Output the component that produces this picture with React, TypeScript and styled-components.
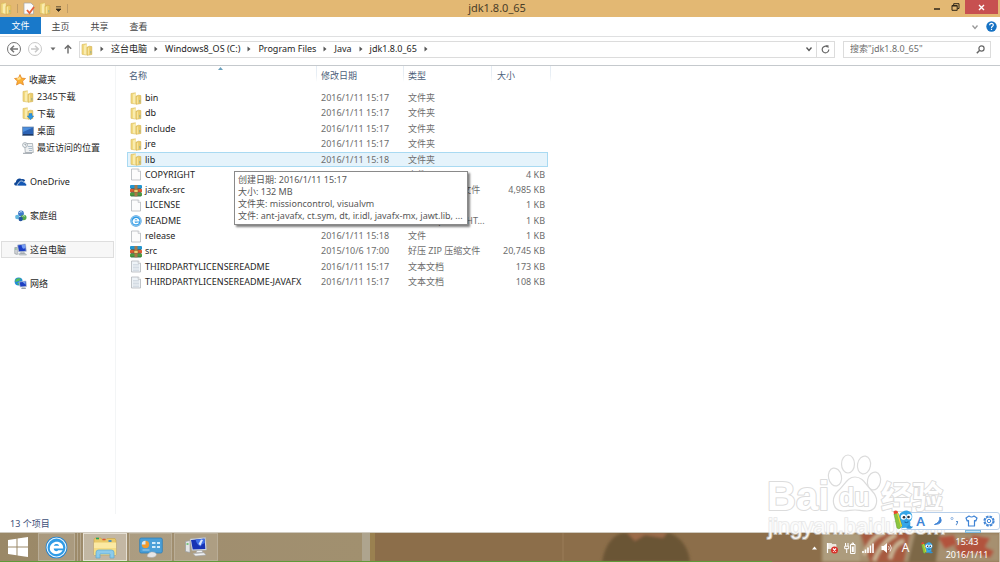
import React from "react";
import styled, { createGlobalStyle, css } from "styled-components";

const GlobalStyle = createGlobalStyle`
  * { box-sizing: border-box; }
  body {
    margin: 0;
    background: #fff;
    font-family: "Noto Sans", "Noto Sans CJK SC", sans-serif;
    font-size: 9px;
    line-height: 12px;
    color: #1e1e1e;
  }
  button, input {
    font: inherit;
    color: inherit;
    border: 0;
    margin: 0;
    padding: 0;
    background: none;
  }
  a { color: inherit; text-decoration: none; }
  svg { display: block; flex: none; }
`;

const Screen = styled.div`
  position: relative;
  display: flex;
  flex-direction: column;
  min-height: 100vh;
  overflow: hidden;
`;

/* ---------- title bar ---------- */
const TitleBar = styled.header`
  display: grid;
  grid-template-columns: 1fr auto 1fr;
  height: 17px;
  background: #e3b873;
`;
const QuickAccess = styled.div`
  display: flex;
  align-items: center;
  gap: 4px;
`;
const Rule = styled.span`
  width: 1px;
  height: 9px;
  margin: 0 1px;
  background: #c09c66;
`;
const Title = styled.h1`
  margin: 0;
  padding-right: 6px;
  font-size: 11px;
  font-weight: 400;
  line-height: 16px;
  color: #4a3d28;
`;
const WindowControls = styled.div`
  display: flex;
  justify-content: flex-end;
  padding-right: 2px;
`;
const WindowButton = styled.button<{ $close?: boolean }>`
  display: flex;
  align-items: center;
  justify-content: center;
  width: ${(p) => (p.$close ? 33 : 19)}px;
  height: 14px;
  background: ${(p) => (p.$close ? "#c75050" : "transparent")};
`;

/* ---------- ribbon ---------- */
const Ribbon = styled.nav`
  display: flex;
  align-items: flex-start;
  height: 20px;
  border-bottom: 1px solid #dfe0e1;
`;
const Tab = styled.button<{ $primary?: boolean }>`
  height: 17px;
  width: ${(p) => (p.$primary ? 41 : 39)}px;
  line-height: 17px;
  color: ${(p) => (p.$primary ? "#fff" : "#444")};
  background: ${(p) => (p.$primary ? "#1979ca" : "transparent")};
  & + & { padding-top: 1px; }
`;
const RibbonEnd = styled.div`
  display: flex;
  align-items: center;
  gap: 7px;
  height: 19px;
  margin-left: auto;
  padding-right: 3px;
`;

/* ---------- address row ---------- */
const AddressRow = styled.div`
  display: flex;
  align-items: center;
  height: 29px;
  padding: 0 9px 4px 6px;
  border-bottom: 1px solid #c5c9cd;
`;
const IconButton = styled.button`
  display: flex;
  align-items: center;
  justify-content: center;
`;
const HistoryButtons = styled.div`
  display: flex;
  align-items: center;
  gap: 5px;
  width: 73px;
`;
const AddressBox = styled.div`
  display: flex;
  flex: 1;
  align-items: center;
  height: 17px;
  border: 1px solid #dcdcdc;
  padding-left: 1px;
`;
const Crumb = styled.a`
  display: flex;
  align-items: center;
  white-space: nowrap;
`;
const CrumbArrow = styled.span`
  display: flex;
  justify-content: center;
  width: 18px;
`;
const AddressEnd = styled.div`
  display: flex;
  align-items: center;
  height: 15px;
  margin-left: auto;
`;
const Refresh = styled(IconButton)`
  width: 18px;
  height: 15px;
  border-left: 1px solid #dcdcdc;
`;
const DropButton = styled(IconButton)`
  width: 14px;
  height: 15px;
`;
const SearchBox = styled.label`
  display: flex;
  align-items: center;
  width: 148px;
  height: 17px;
  margin-left: 8px;
  padding: 0 5px 0 6px;
  border: 1px solid #dcdcdc;
  input {
    flex: 1;
    min-width: 0;
    outline: 0;
  }
  input::placeholder { color: #6d6d6d; opacity: 1; }
`;

/* ---------- body ---------- */
const Body = styled.div`
  display: flex;
  flex: 1;
`;
const Sidebar = styled.aside`
  display: flex;
  flex-direction: column;
  gap: 17px;
  width: 116px;
  padding: 5px 1px 0;
  border-right: 1px solid #f3f5f6;
`;
const NavGroup = styled.div`
  display: flex;
  flex-direction: column;
`;
const NavItem = styled.a<{ $child?: boolean; $active?: boolean }>`
  display: flex;
  align-items: center;
  gap: 3px;
  height: 17px;
  padding-left: ${(p) => (p.$child ? 20 : 12)}px;
  white-space: nowrap;
  border: 1px solid transparent;
  ${(p) =>
    p.$active &&
    css`
      border-color: #dedede;
      background: #f7f7f7;
    `}
`;

const Files = styled.main`
  flex: 1;
  padding-left: 11px;
`;
const FileTable = styled.table`
  width: 421px;
  table-layout: fixed;
  border-collapse: separate;
  border-spacing: 0;
`;
const HeadCell = styled.th<{ $width: number; $last?: boolean }>`
  position: relative;
  width: ${(p) => p.$width}px;
  height: 25px;
  padding: 0 0 5px ${(p) => (p.$last ? 5 : 4)}px;
  font-weight: 400;
  text-align: left;
  color: #4c607a;
  &:first-child { padding-left: 2px; }
  &::after {
    content: "";
    position: absolute;
    top: 0;
    right: ${(p) => (p.$last ? -3 : 0)}px;
    width: 1px;
    height: 16px;
    background: linear-gradient(#e4ecf4, #e9eff5 60%, #fff);
  }
`;
const SortMark = styled.span`
  position: absolute;
  top: 1px;
  left: 91px;
`;
const FileRow = styled.tr<{ $active?: boolean }>`
  height: 15px;
  &:nth-child(3n) { height: 16px; }
  td {
    padding: 0 3px 1px 4px;
    white-space: nowrap;
    color: #6d6d6d;
    border: 0 solid #a9daf2;
    ${(p) =>
      p.$active &&
      css`
        padding-bottom: 0;
        background: #e5f3fb;
        border-width: 1px 0;
        line-height: 10px;
      `}
  }
  td:first-child { padding-left: 3px; padding-right: 0; color: #1e1e1e; ${(p) => p.$active && "border-left-width: 1px; padding-left: 2px;"} }
  td:last-child { text-align: right; ${(p) => p.$active && "border-right-width: 1px; padding-right: 2px;"} }
`;
const NameCell = styled.div`
  position: relative;
  display: flex;
  align-items: center;
  gap: 3px;
  height: 13px;
`;
const Tooltip = styled.div`
  position: absolute;
  z-index: 2;
  top: 18px;
  left: 104px;
  width: 234px;
  padding: 2px 3px;
  border: 1px solid #8a8a8a;
  background: #fff;
  color: #575757;
  box-shadow: 2px 2px 2px rgba(0, 0, 0, 0.5);
  line-height: 12px;
`;

const StatusBar = styled.footer`
  display: flex;
  align-items: center;
  height: 18px;
  padding: 2px 10px 0;
  color: #3d4f78;
`;

/* ---------- taskbar ---------- */
const Taskbar = styled.div`
  position: relative;
  display: flex;
  height: 30px;
  border-top: 1px solid #cfcabf;
  background: #8b6d49;
`;
const Wallpaper = styled.svg`
  position: absolute;
  inset: 0;
  width: 100%;
  height: 100%;
`;
const TaskButtons = styled.div`
  position: relative;
  display: flex;
  gap: 2px;
`;
const TaskButton = styled.button<{ $width: number; $tone?: "open" | "active" }>`
  display: flex;
  align-items: center;
  justify-content: center;
  width: ${(p) => p.$width}px;
  height: 28px;
  border: 1px solid ${(p) => (p.$tone === "active" ? "#e5dfd3" : p.$tone ? "#b9ad97" : "transparent")};
  background: ${(p) =>
    p.$tone === "active" ? "rgba(255,255,255,.38)" : p.$tone ? "rgba(255,255,255,.14)" : "transparent"};
`;
const Divider = styled.span`
  width: 4px;
  height: 28px;
  border: solid #b5a78f;
  border-width: 0 1px;
`;
const Tray = styled.div`
  position: relative;
  display: flex;
  align-items: center;
  margin-left: auto;
  padding-right: 2px;
  border-right: 1px solid #c8bba6;
`;
const TrayButton = styled.button<{ $width?: number }>`
  display: flex;
  align-items: center;
  justify-content: center;
  width: ${(p) => p.$width ?? 18}px;
  height: 28px;
  font-size: 12px;
  color: #fff;
`;
const Clock = styled.time`
  width: 60px;
  text-align: center;
  line-height: 13px;
  color: #fff;
`;

/* ---------- floating input-method bar and watermark ---------- */
const ImeBar = styled.div`
  position: absolute;
  z-index: 5;
  right: 0;
  bottom: 32px;
  display: flex;
  align-items: center;
  justify-content: flex-end;
  width: 100px;
  height: 18px;
  padding-right: 2px;
  border: 1px solid #b9d0ea;
  border-radius: 3px;
  background: #fff;
`;
const ImeButton = styled.button`
  display: flex;
  align-items: center;
  justify-content: center;
  width: 17px;
  height: 16px;
  font-size: 13px;
  font-weight: 600;
  color: #3f84d6;
`;
const Mascot = styled.span`
  position: absolute;
  left: -8px;
  top: -3px;
`;
const ImeHandle = styled.span`
  position: absolute;
  right: 18px;
  bottom: -4px;
  width: 16px;
  height: 3px;
  border: 1px solid #7fb9de;
  background: #c4e4f6;
`;
const Watermark = styled.div`
  position: absolute;
  z-index: 4;
  right: 51px;
  bottom: 18px;
  width: 182px;
  height: 90px;
  pointer-events: none;
`;
const WatermarkArt = styled.svg`
  position: absolute;
  inset: 0;
  overflow: visible;
  text {
    font-family: "Liberation Sans", "Noto Sans CJK SC", sans-serif;
    paint-order: stroke;
  }
`;

/* ---------- icons ---------- */
const FolderIcon = ({ arrow = false }: { arrow?: boolean }) => (
  <svg width="12" height="13" viewBox="0 0 12 13">
    <path d="M1 1.500 5.500.8V12L1 11.300z" fill="#f1d980" stroke="#d9bb5c" strokeWidth=".6" />
    <path d="M3 2.500 5.800 1v11L3 11z" fill="#faecae" />
    <path d="M6 4.200 8.500 3.200 10.800 3.600v7.900L6 12.300z" fill="#eacb69" stroke="#d0ae4b" strokeWidth=".6" />
    <path d="M6.800 5 8.200 4.300v7.200l-1.400.3z" fill="#f7e49c" />
    <path d="M9.800 8v2.500" stroke="#8fae9a" strokeWidth=".9" />
    {arrow && <path d="M7 6.500h3V9h1.800L8.500 12.800 5.200 9H7z" fill="#2b95e0" stroke="#1b70b8" strokeWidth=".4" />}
  </svg>
);
const StarIcon = () => (
  <svg width="12" height="12" viewBox="0 0 12 12">
    <path d="m6 .6 1.600 3.500 3.900.4-2.900 2.600.9 3.900L6 9l-3.500 2 .9-3.900L.5 4.500l3.900-.4z" fill="#fbb034" stroke="#e07f1f" strokeWidth=".7" />
    <path d="m6 2.500 1 2.400-2.600 1L2.500 5z" fill="#ffe08a" />
  </svg>
);
const DesktopIcon = () => (
  <svg width="12" height="12" viewBox="0 0 12 12">
    <rect x=".5" y="2" width="11" height="8.500" fill="#2b62b4" stroke="#7f95ad" strokeWidth=".8" />
    <path d="M1 2.500h10L1 7z" fill="#4d8fdd" />
    <path d="M1 9.800h10" stroke="#1c2c4c" />
  </svg>
);
const RecentIcon = () => (
  <svg width="12" height="12" viewBox="0 0 12 12">
    <path d="M2.500 1.500h8l.8 9h-8z" fill="#eef0f1" stroke="#9aa2a8" strokeWidth=".7" />
    <path d="M6 4.500h4M6.500 6.500h3.800M7 8.500h3" stroke="#8fa6bc" strokeWidth=".7" />
    <circle cx="3" cy="3" r="2.400" fill="#f6f9fb" stroke="#8d979f" strokeWidth=".7" />
    <path d="M3 1.700V3h1.200M1 11.300h9" stroke="#7d8890" strokeWidth=".8" fill="none" />
  </svg>
);
const OneDriveIcon = () => (
  <svg width="13" height="10" viewBox="0 0 13 10">
    <path d="M1.500 8.500C-.4 8-.1 5.500 1.900 5.300 1.900 2 5.500.3 7.900 2.200 9.500 1.400 11 2.600 11 4L4 8.500z" fill="#0f4796" />
    <path d="M5 9C2.800 9 2.900 6.300 4.900 6.200 5 3.600 8.700 3.300 9.700 5.200c1.500-.2 2.200.6 2.100 1.500C13.200 7 13 9 11.700 9z" fill="#1357b4" stroke="#fff" strokeWidth=".7" />
  </svg>
);
const HomegroupIcon = () => (
  <svg width="13" height="12" viewBox="0 0 13 12">
    <circle cx="7" cy="3.500" r="2.900" fill="#3c78c8" />
    <circle cx="3.300" cy="7" r="2.200" fill="#63b7de" />
    <circle cx="9.700" cy="7.500" r="2.800" fill="#55aa4c" />
    <circle cx="6.700" cy="9" r="2.200" fill="#24559f" />
    <path d="M5.300 2.800c.8-1.300 2-1.400 2.900-.6M8.500 6.300c.8-.8 1.700-.7 2.300 0" stroke="#d7ecff" fill="none" />
  </svg>
);
const ComputerIcon = () => (
  <svg width="13" height="13" viewBox="0 0 13 13">
    <path d="M.8 4.500h2.500v7L.8 10.700z" fill="#d7dadd" stroke="#848b92" strokeWidth=".6" />
    <path d="M1.300 6h1.200" stroke="#38ad40" strokeWidth=".9" />
    <path d="M3.500 2 11.500 1l.8 7.300-7.700.5z" fill="#1c3fc5" stroke="#b8c2cf" strokeWidth=".8" />
    <path d="m7.500 2 3.500-.4.3 3.400c-2.200 2-3.300.1-3.800-3z" fill="#769df4" />
    <path d="m7 9 3 0 .5 1.500H6.500zM4.500 10.700h7l1 1.300h-7z" fill="#d6dade" stroke="#8c949c" strokeWidth=".5" />
  </svg>
);
const SystemIcon = () => (
  <svg width="24" height="22" viewBox="0 0 24 22">
    <path d="M1.500 5.500 6 4.500v12l-4.500-1z" fill="#e3e5e6" stroke="#989c9f" strokeWidth=".7" />
    <path d="M2.500 8h2" stroke="#42b549" strokeWidth="1.300" />
    <path d="M6 3 21.500 1.500l1 12.500-14.500.500z" fill="#e6eaee" stroke="#aab0b6" strokeWidth=".6" />
    <path d="M7 4 20.600 2.600l.8 10.300-12.700.5z" fill="#1733b4" />
    <path d="m11.500 3.600 9-.9.3 4.300q-3 .5-4.300 3.500-3.500-1-5-6.900z" fill="#3f6fe8" />
    <path d="m17 3.500 2 .5-2.500 5.500-2-1.500z" fill="#d9e5ff" />
    <path d="m13 14.500 5-.2.700 2.200-6.700.3zM9 17.500l11-.7 2 2.200-10.500 1z" fill="#f0f1f2" stroke="#a2a6a9" strokeWidth=".6" />
  </svg>
);
const NetworkIcon = () => (
  <svg width="13" height="13" viewBox="0 0 13 13">
    <circle cx="4.600" cy="4.600" r="4" fill="#218bd8" />
    <path d="M2 2.300C4 .6 6 1 7 2L5 4 3 4.600 1 5zM3 6h2.500L5 8.300z" fill="#55bd55" />
    <path d="m5 5 7-1 .5 5.500-6.300.5z" fill="#1d3fc2" stroke="#c2cad2" strokeWidth=".7" />
    <path d="m8.500 5 2.800-.4.2 2.900z" fill="#78a3f2" />
    <path d="M8 10.500h3.500l.5 1.500H7z" fill="#98a1aa" />
  </svg>
);
const PageIcon = ({ lined = false }: { lined?: boolean }) => (
  <svg width="12" height="13" viewBox="0 0 12 13">
    <path d="M1.500 1h6.800L10.500 3.200V12h-9z" fill={lined ? "#eef3f7" : "#fcfcfc"} stroke="#a9adb1" strokeWidth=".7" />
    <path d="M8.200 1v2.400h2.300" fill="#fff" stroke="#a9adb1" strokeWidth=".6" />
    {lined && <path d="M3 4.500h6M3 6h6M3 7.500h6M3 9h6M3 10.500h6" stroke="#c2ccd6" strokeWidth=".6" />}
  </svg>
);
const ArchiveIcon = () => (
  <svg width="12" height="13" viewBox="0 0 12 13">
    <rect x="0" y="1" width="12" height="3.800" rx="1" fill="#2295cf" />
    <rect x="0" y="4.800" width="12" height="3.800" rx="1" fill="#dd5b34" />
    <rect x="0" y="8.600" width="12" height="3.700" rx="1" fill="#4d9b3d" />
    <path d="M1 4.500h10M1 8.300h10M1 12h10" stroke="#294f49" strokeWidth=".6" />
    <rect x="4.500" y="1" width="3" height="11.300" fill="#a8794a" />
    <rect x="4" y="5.300" width="4" height="3" fill="#f0cf72" stroke="#7e5721" strokeWidth=".5" />
  </svg>
);
const BrowserGlyph = ({ size = 12 }: { size?: number }) => (
  <svg width={size} height={size} viewBox="0 0 24 24">
    <circle cx="12" cy="12" r="11.300" fill="#1c83d4" />
    <circle cx="12" cy="12" r="9.900" fill="#2f9be6" stroke="#e7f5fe" strokeWidth="1.200" />
    <path d="M5 13h14c.5-9.500-13.500-9.500-14 0 .3 7 11 7.500 13.400 1.900h-4.600c-1.600 1.700-4.500.9-4.700-1.900zM9.200 10.300c.6-2.500 5-2.500 5.600 0z" fill="#fff" fillRule="evenodd" />
  </svg>
);
const Chevron = ({ color = "#777" }: { color?: string }) => (
  <svg width="8" height="6" viewBox="0 0 8 6">
    <path d="m1.500 1.500 2.500 3 2.500-3" fill="none" stroke={color} strokeWidth="1.300" />
  </svg>
);
const HistoryIcon = ({ forward = false }: { forward?: boolean }) => (
  <svg width="16" height="16" viewBox="0 0 16 16">
    <g fill="none" stroke={forward ? "#c9c9c9" : "#747474"} transform={forward ? "matrix(-1 0 0 1 16 0)" : undefined}>
      <circle cx="8" cy="8" r="6.500" strokeWidth="1" />
      <path d="M12 8H5M8 4.700 4.700 8 8 11.300" strokeWidth="1.500" />
    </g>
  </svg>
);
const MascotIcon = ({ size = 20 }: { size?: number }) => (
  <svg width={size} height={size} viewBox="0 0 20 20">
    <path d="M9 18c-3-2-3-5-2-7 -2-4-1-8 3-9.500C12 0 15 0 17 2c3 2 3 7 0 9.500 .8 2 .3 4.500-1 6z" fill="#35a6e8" />
    <path d="M13 18c3 1.500 6 1 7-1.500-2 .5-3-1-4-2" fill="#2b93d8" />
    <path d="m1 4 4-1 4 13-3 3-2-1z" fill="#8cc63f" stroke="#5a9b27" strokeWidth=".5" />
    <path d="m4 3.300 1-.3 4 13-1 1z" fill="#f5d63d" />
    <path d="M.5 1.500Q2.500-.3 4.500 1L5 3 1 4.200z" fill="#e8482f" />
    <circle cx="10.500" cy="7" r="2.700" fill="#fff" />
    <circle cx="16" cy="6.700" r="2.700" fill="#fff" />
    <circle cx="11" cy="7.200" r="1.300" fill="#23303d" />
    <circle cx="15.500" cy="7" r="1.300" fill="#23303d" />
    <path d="M11.500 12q2 1.200 4-.2" stroke="#175f96" fill="none" />
  </svg>
);
const TaskFolderIcon = () => (
  <svg width="24" height="24" viewBox="0 0 24 24">
    <path d="M1 4.500 2 3h6l1 1.500h4l1-1h8l1 2V20H1z" fill="#e9c968" stroke="#c9a545" strokeWidth=".6" />
    <path d="M3 3.500h3" stroke="#23a45a" strokeWidth="1.600" />
    <path d="M9.500 4.500h3" stroke="#e4572e" strokeWidth="1.600" />
    <path d="M15.500 6h3" stroke="#2785cf" strokeWidth="1.600" />
    <path d="M1 7.500h22V20H1z" fill="#fbe9a2" />
    <path d="M1 13h22v7H1z" fill="#f5dc83" />
    <path d="M3 23v-5.500q0-2.500 2.500-2.500h13q2.500 0 2.500 2.500V23h-4v-4H7v4z" fill="#8ccbea" stroke="#5ba8d0" strokeWidth=".7" />
  </svg>
);
const ControlPanelIcon = () => (
  <svg width="24" height="22" viewBox="0 0 24 22">
    <rect x=".7" y="2" width="22.600" height="15" rx="1.500" fill="#4a9fd8" stroke="#2f7fb8" strokeWidth=".8" />
    <circle cx="6.500" cy="8.500" r="3.700" fill="#f29b2e" />
    <path d="M6.500 8.500V4.800a3.700 3.700 0 0 0-3.700 3.700z" fill="#d8ecf9" />
    <path d="M13 6h3.500v2H13zM18 6h3v2h-3zM13 10h3.500v2H13zM18 10h3v2h-3z" fill="#d3ebfa" />
    <path d="M3.500 14h7" stroke="#a8d3f0" />
    <path d="M8 20.500q0-3 4-4.500 5-.5 5.500 2.500-.5 3-4.500 3t-5-1z" fill="#e6e6e6" stroke="#a8a8a8" strokeWidth=".5" />
  </svg>
);

const places = [
  { label: "2345下载", icon: <FolderIcon /> },
  { label: "下载", icon: <FolderIcon arrow /> },
  { label: "桌面", icon: <DesktopIcon /> },
  { label: "最近访问的位置", icon: <RecentIcon /> },
];
const roots = [
  { label: "OneDrive", icon: <OneDriveIcon /> },
  { label: "家庭组", icon: <HomegroupIcon /> },
  { label: "这台电脑", icon: <ComputerIcon />, active: true },
  { label: "网络", icon: <NetworkIcon /> },
];
const crumbs = ["这台电脑", "Windows8_OS (C:)", "Program Files", "Java", "jdk1.8.0_65"];

const icons = {
  folder: <FolderIcon />,
  page: <PageIcon />,
  text: <PageIcon lined />,
  zip: <ArchiveIcon />,
  web: <BrowserGlyph />,
};
type Row = { name: string; icon: keyof typeof icons; date: string; type: string; size?: string };
const rows: Row[] = [
  { name: "bin", icon: "folder", date: "2016/1/11 15:17", type: "文件夹" },
  { name: "db", icon: "folder", date: "2016/1/11 15:17", type: "文件夹" },
  { name: "include", icon: "folder", date: "2016/1/11 15:17", type: "文件夹" },
  { name: "jre", icon: "folder", date: "2016/1/11 15:17", type: "文件夹" },
  { name: "lib", icon: "folder", date: "2016/1/11 15:18", type: "文件夹" },
  { name: "COPYRIGHT", icon: "page", date: "2016/1/11 15:17", type: "文件", size: "4 KB" },
  { name: "javafx-src", icon: "zip", date: "2016/1/11 15:17", type: "好压 ZIP 压缩文件", size: "4,985 KB" },
  { name: "LICENSE", icon: "page", date: "2016/1/11 15:17", type: "文件", size: "1 KB" },
  { name: "README", icon: "web", date: "2016/1/11 15:17", type: "2345Explorer HT...", size: "1 KB" },
  { name: "release", icon: "page", date: "2016/1/11 15:18", type: "文件", size: "1 KB" },
  { name: "src", icon: "zip", date: "2015/10/6 17:00", type: "好压 ZIP 压缩文件", size: "20,745 KB" },
  { name: "THIRDPARTYLICENSEREADME", icon: "text", date: "2016/1/11 15:17", type: "文本文档", size: "173 KB" },
  { name: "THIRDPARTYLICENSEREADME-JAVAFX", icon: "text", date: "2016/1/11 15:17", type: "文本文档", size: "108 KB" },
];

const Arrow = () => (
  <CrumbArrow>
    <svg width="4" height="6" viewBox="0 0 4 6">
      <path d="M.5.5 3.500 3 .5 5.500z" fill="#555" />
    </svg>
  </CrumbArrow>
);

export default function App() {
  return (
    <Screen lang="zh-CN">
      <GlobalStyle />
      <TitleBar>
        <QuickAccess>
          <FolderIcon />
          <Rule />
          <svg width="12" height="13" viewBox="0 0 12 13">
            <path d="M1 1h7l2.500 2.500V12H1z" fill="#fbfbfb" stroke="#a4a4a4" strokeWidth=".7" />
            <path d="m4 8 2.500 3L11 5" fill="none" stroke="#e5603b" strokeWidth="1.800" />
          </svg>
          <FolderIcon />
          <svg width="7" height="6" viewBox="0 0 7 6">
            <path d="M1 .8h5M1 3h5L3.500 5.500z" stroke="#3a3020" strokeWidth=".8" fill="#3a3020" />
          </svg>
          <Rule />
        </QuickAccess>
        <Title>jdk1.8.0_65</Title>
        <WindowControls>
          <WindowButton aria-label="最小化">
            <svg width="8" height="8" viewBox="0 0 8 8"><path d="M1 6h6" stroke="#2e2618" strokeWidth="1.500" /></svg>
          </WindowButton>
          <WindowButton aria-label="还原">
            <svg width="9" height="8" viewBox="0 0 9 8">
              <path d="M1 2.500h5.200v4.800H1zM1 3h5.200M2.700 2.300V.7h5.300v4.800H6.500" fill="none" stroke="#2e2618" strokeWidth="1" />
            </svg>
          </WindowButton>
          <WindowButton $close aria-label="关闭">
            <svg width="7" height="7" viewBox="0 0 7 7"><path d="m1 1 5 5M6 1 1 6" stroke="#fff" strokeWidth="1.400" /></svg>
          </WindowButton>
        </WindowControls>
      </TitleBar>

      <Ribbon>
        <Tab $primary>文件</Tab>
        <Tab>主页</Tab>
        <Tab>共享</Tab>
        <Tab>查看</Tab>
        <RibbonEnd>
          <IconButton aria-label="展开功能区"><Chevron color="#999" /></IconButton>
          <IconButton aria-label="帮助">
            <svg width="11" height="11" viewBox="0 0 11 11">
              <circle cx="5.500" cy="5.500" r="5.200" fill="#1672c4" />
              <path d="M3.700 4.200C3.700 1.600 7.500 1.800 7.300 4.200 7.200 5.400 5.500 5.300 5.500 6.900M5.500 7.700v1.300" fill="none" stroke="#fff" strokeWidth="1.200" />
            </svg>
          </IconButton>
        </RibbonEnd>
      </Ribbon>

      <AddressRow>
        <HistoryButtons>
          <IconButton aria-label="后退"><HistoryIcon /></IconButton>
          <IconButton aria-label="前进"><HistoryIcon forward /></IconButton>
          <IconButton aria-label="最近位置">
            <svg width="10" height="4" viewBox="0 0 10 4"><path d="M2.500.5h5L5 3.500z" fill="#6a6a6a" /></svg>
          </IconButton>
          <IconButton aria-label="向上">
            <svg width="10" height="10" viewBox="0 0 10 10">
              <path d="M5 9.500V1.500M1.800 4.700 5 1.500l3.200 3.200" fill="none" stroke="#6a6a6a" strokeWidth="1.400" />
            </svg>
          </IconButton>
        </HistoryButtons>
        <AddressBox>
          <FolderIcon />
          <Arrow />
          {crumbs.map((c) => (
            <Crumb href="#" key={c}>
              {c}
              <Arrow />
            </Crumb>
          ))}
          <AddressEnd>
            <DropButton aria-label="历史记录"><Chevron color="#555" /></DropButton>
            <Refresh aria-label="刷新">
              <svg width="9" height="9" viewBox="0 0 9 9">
                <path d="M6.500 1.900A3.300 3.300 0 1 0 7.800 4.600" fill="none" stroke="#666" strokeWidth="1.200" />
                <path d="M4.500.3h3v3z" fill="#666" />
              </svg>
            </Refresh>
          </AddressEnd>
        </AddressBox>
        <SearchBox>
          <input type="text" aria-label="搜索" placeholder={'搜索"jdk1.8.0_65"'} />
          <svg width="9" height="9" viewBox="0 0 9 9">
            <circle cx="5.500" cy="3.500" r="2.600" fill="none" stroke="#666" strokeWidth="1.200" />
            <path d="M3.700 5.300.8 8.200" stroke="#666" strokeWidth="1.500" />
          </svg>
        </SearchBox>
      </AddressRow>

      <Body>
        <Sidebar>
          <NavGroup>
            <NavItem href="#"><StarIcon />收藏夹</NavItem>
            {places.map((p) => (
              <NavItem href="#" $child key={p.label}>{p.icon}{p.label}</NavItem>
            ))}
          </NavGroup>
          {roots.map((r) => (
            <NavItem href="#" key={r.label} $active={r.active}>{r.icon}{r.label}</NavItem>
          ))}
        </Sidebar>
        <Files>
          <FileTable>
            <thead>
              <tr>
                <HeadCell $width={190}>
                  名称
                  <SortMark>
                    <svg width="5" height="3" viewBox="0 0 5 3"><path d="M0 3 2.500 0 5 3z" fill="#6aa0bd" /></svg>
                  </SortMark>
                </HeadCell>
                <HeadCell $width={87}>修改日期</HeadCell>
                <HeadCell $width={88}>类型</HeadCell>
                <HeadCell $width={56} $last>大小</HeadCell>
              </tr>
            </thead>
            <tbody>
              {rows.map((r) => (
                <FileRow key={r.name} $active={r.name === "lib"}>
                  <td>
                    <NameCell>
                      {icons[r.icon]}
                      {r.name}
                      {r.name === "lib" && (
                        <Tooltip role="tooltip">
                          <div>创建日期: 2016/1/11 15:17</div>
                          <div>大小: 132 MB</div>
                          <div>文件夹: missioncontrol, visualvm</div>
                          <div>文件: ant-javafx, ct.sym, dt, ir.idl, javafx-mx, jawt.lib, ...</div>
                        </Tooltip>
                      )}
                    </NameCell>
                  </td>
                  <td>{r.date}</td>
                  <td>{r.type}</td>
                  <td>{r.size}</td>
                </FileRow>
              ))}
            </tbody>
          </FileTable>
        </Files>
      </Body>
      <StatusBar>13 个项目</StatusBar>

      <Taskbar>
        <Wallpaper viewBox="0 0 1000 29" preserveAspectRatio="none">
          <defs>
            <linearGradient id="desk" x1="0" x2="1">
              <stop offset="0" stopColor="#9a8867" />
              <stop offset=".5" stopColor="#a08e6f" />
              <stop offset="1" stopColor="#a1906f" />
            </linearGradient>
            <filter id="soft"><feGaussianBlur stdDeviation="1.500" /></filter>
          </defs>
          <rect width="1000" height="29" fill="#8c6e4a" />
          <rect width="370" height="29" fill="url(#desk)" />
          <rect x="362" width="8" height="29" fill="#aea48e" />
          <rect x="370" width="5" height="29" fill="#9a8150" />
          <path d="M563 0v29" stroke="#9a7d58" />
          <g filter="url(#soft)">
            <path d="M602 29Q606 5 622 0h48q18 8 20 29z" fill="#6b5535" />
            <path d="M627 0h40l-4 5-18-3-10 6z" fill="#9c6b4a" />
            <path d="M822 0h38v29h-38z" fill="#ad9c7d" />
            <path d="M860 0h140v29H860z" fill="#a69070" />
            <path d="M860 0h50l-6 29h-34z" fill="#a75a40" />
            <path d="M864 22Q872 2 885 0M874 28Q882 8 896 2M890 26Q894 10 904 8" stroke="#c9b595" strokeWidth="4" fill="none" />
            <path d="M915 0h25l-4 29h-28z" fill="#7d6746" />
            <path d="m938 4 16-2 3 9-12 5zM954 14l14-10 5 14-9 8zM972 2l18 3-5 9 9 4-4 7-19-6z" fill="#b2533c" />
          </g>
          <rect y="28" width="772" height="1" fill="#5f9a38" />
        </Wallpaper>
        <TaskButtons>
          <TaskButton $width={36} aria-label="开始">
            <svg width="20" height="20" viewBox="0 0 20 20">
              <path d="M0 3 8.500 1.800V9.500H0zM9.500 1.600 20 0v9.500H9.500zM0 10.500h8.500v7.700L0 17zM9.500 10.500H20V20L9.500 18.400z" fill="#fff" />
            </svg>
          </TaskButton>
          <TaskButton $width={37} $tone="open" aria-label="浏览器"><BrowserGlyph size={23} /></TaskButton>
          <Divider />
          <TaskButton $width={44} $tone="active" aria-label="文件资源管理器"><TaskFolderIcon /></TaskButton>
          <TaskButton $width={43} $tone="open" aria-label="控制面板"><ControlPanelIcon /></TaskButton>
          <TaskButton $width={44} $tone="open" aria-label="系统"><SystemIcon /></TaskButton>
        </TaskButtons>
        <Tray>
          <TrayButton aria-label="显示隐藏的图标">
            <svg width="5" height="4" viewBox="0 0 5 4"><path d="M0 3.500 2.500.5 5 3.500z" fill="#fff" /></svg>
          </TrayButton>
          <TrayButton aria-label="操作中心">
            <svg width="12" height="12" viewBox="0 0 12 12">
              <path d="M1.500 1v10" stroke="#fff" strokeWidth="1.200" />
              <path d="M2 1.500h3.500l1 1H10v5H6l-1-1H2z" fill="#ede8df" stroke="#fff" strokeWidth=".6" />
              <circle cx="8.500" cy="8" r="3.500" fill="#d9302a" />
              <path d="m7 6.500 3 3m0-3-3 3" stroke="#fff" strokeWidth="1.100" />
            </svg>
          </TrayButton>
          <TrayButton aria-label="电源">
            <svg width="12" height="12" viewBox="0 0 12 12">
              <path d="M1.500 1v3M4 1v3M.7 4.200h4v2.500h-4zM2.700 6.500V11" stroke="#fff" fill="none" strokeWidth="1" />
              <path d="M6.500 2.500h4.500v9H6.500zM8 1h1.500v1.500H8z" fill="none" stroke="#fff" />
              <path d="M7.800 4.500h2V10h-2z" fill="#fff" />
            </svg>
          </TrayButton>
          <TrayButton aria-label="无线网络">
            <svg width="12" height="10" viewBox="0 0 12 10">
              <path d="M1 10V8M3.500 10V6.500M6 10V4.500M8.500 10V2.500M11 10V.5" stroke="#fff" strokeWidth="1.600" />
            </svg>
          </TrayButton>
          <TrayButton aria-label="音量">
            <svg width="11" height="12" viewBox="0 0 11 12">
              <path d="M.5 4h2L6 1v10L2.500 8h-2z" fill="#fff" />
              <path d="M7.500 4q1.500 2 0 4M9 2.500q2.600 3.500 0 7" stroke="#fff" fill="none" strokeWidth=".8" />
            </svg>
          </TrayButton>
          <TrayButton $width={21}>A</TrayButton>
          <TrayButton $width={21} aria-label="输入法"><MascotIcon size={12} /></TrayButton>
          <Clock>
            15:43
            <br />
            2016/1/11
          </Clock>
        </Tray>
      </Taskbar>

      <ImeBar>
        <Mascot><MascotIcon /></Mascot>
        <ImeHandle />
        <ImeButton>A</ImeButton>
        <ImeButton aria-label="半角">
          <svg width="10" height="10" viewBox="0 0 10 10"><path d="M7 1Q11 8 1.500 8.500 7 6.500 7 1z" fill="#3f84d6" stroke="#3f84d6" /></svg>
        </ImeButton>
        <ImeButton aria-label="标点">
          <svg width="9" height="10" viewBox="0 0 9 10">
            <circle cx="2" cy="2.500" r="1.100" fill="none" stroke="#7aa6dc" strokeWidth=".8" />
            <path d="M6 5.500h1.500q.5 2-1.500 3.500" fill="none" stroke="#5a8fcf" strokeWidth="1.200" />
          </svg>
        </ImeButton>
        <ImeButton aria-label="皮肤">
          <svg width="13" height="12" viewBox="0 0 13 12">
            <path d="M4 1q2.500 2 5 0l3 2-1.200 3-1.300-.5V11h-6V5.500L2.200 6 1 3z" fill="none" stroke="#3f84d6" strokeWidth="1.200" strokeLinejoin="round" />
          </svg>
        </ImeButton>
        <ImeButton aria-label="设置">
          <svg width="12" height="12" viewBox="0 0 12 12">
            <circle cx="6" cy="6" r="4.900" fill="none" stroke="#3f84d6" strokeWidth="1.400" strokeDasharray="2.600 1.250" />
            <circle cx="6" cy="6" r="4" fill="none" stroke="#3f84d6" strokeWidth=".9" />
            <circle cx="6" cy="6" r="1.700" fill="none" stroke="#3f84d6" />
          </svg>
        </ImeButton>
      </ImeBar>

      <Watermark>
        <WatermarkArt width="182" height="90" viewBox="0 0 182 90" fill="#fff" stroke="#dcdcdc" strokeWidth="1.200" strokeLinejoin="round">
          <ellipse cx="68" cy="23" rx="6.500" ry="9" transform="rotate(-12 68 23)" />
          <ellipse cx="81" cy="10" rx="6.500" ry="9" />
          <ellipse cx="97" cy="11" rx="6.500" ry="9" transform="rotate(10 97 11)" />
          <ellipse cx="107" cy="27" rx="6.500" ry="9" transform="rotate(12 107 27)" />
          <path d="M88 23c8 0 11 8 17 14 8 8 5 20-5 20-6 0-8-1-12-1s-7 1-12 1c-10 0-13-12-5-20 7-6 9-14 17-14z" />
          <text x="0" y="56" fontSize="40" fontWeight="700" strokeWidth="2">Bai</text>
          <text x="72" y="52" fontSize="25" fontWeight="700" strokeWidth="2">du</text>
          <text x="114" y="54" fontSize="31" fontWeight="700" strokeWidth="2">经验</text>
          <text x="1" y="80" fontSize="22" fillOpacity=".85" strokeOpacity=".6" strokeWidth="2">jingyan.baidu.com</text>
        </WatermarkArt>
      </Watermark>
    </Screen>
  );
}
